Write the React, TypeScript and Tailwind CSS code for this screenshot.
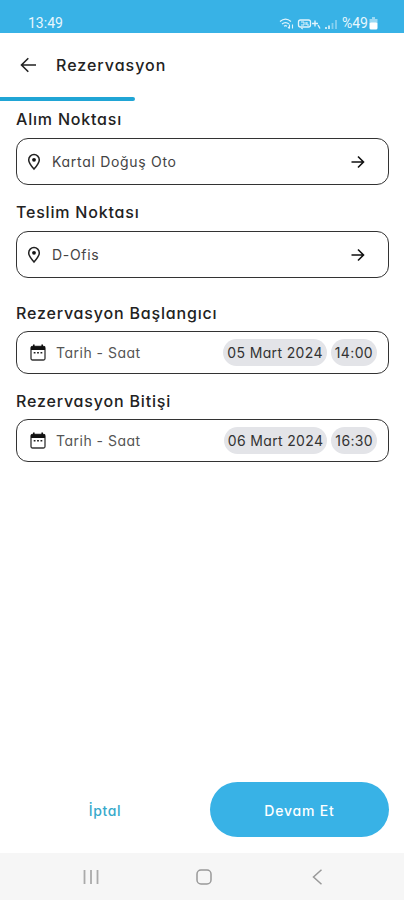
import type { ReactNode } from 'react';

function PinIcon() {
  return (
    <svg width="14" height="18" viewBox="0 0 14 18" fill="none">
      <path
        d="M7 16C4 12.600 1.700 9.500 1.700 6.900a5.300 5.300 0 0 1 10.600 0c0 2.600-2.300 5.700-5.300 9.100Z"
        stroke="#222"
        strokeWidth="1.500"
      />
      <circle cx="7" cy="6.800" r="1.900" fill="#111" />
    </svg>
  );
}

function CalendarIcon() {
  return (
    <svg width="16" height="17" viewBox="0 0 16 17" fill="none">
      <rect x="1" y="2.500" width="14" height="13.500" rx="1.500" stroke="#333" strokeWidth="1.300" />
      <path d="M1 2.500h14v3.500H1z" fill="#111" />
      <path d="M3.800 0.500v3M12.200 0.500v3" stroke="#111" strokeWidth="1.600" />
      <path d="M3.700 8.700h1.800M7.100 8.700h1.800M10.500 8.700h1.800" stroke="#222" strokeWidth="1.500" />
    </svg>
  );
}

function ArrowRight() {
  return (
    <svg width="14" height="14" viewBox="0 0 14 14" fill="none" stroke="#111" strokeWidth="1.600">
      <path d="M0.500 7h12M7 1.500 12.500 7 7 12.500" />
    </svg>
  );
}

function StatusIcons() {
  return (
    <svg width="60" height="14" viewBox="0 0 60 14" fill="none" stroke="#e2f4fc">
      {/* wifi */}
      <path d="M1 4.500c3.500-3 7.500-3 11 0M3 7c2.300-1.900 4.700-1.900 7 0M5 9.200c1-.8 2-.8 3 0" strokeWidth="1.200" />
      <path d="M10.500 7.500v4M9 10l1.500 1.500M13.500 11.500v-4" strokeWidth="1.100" />
      {/* VoLTE */}
      <rect x="19.500" y="3" width="12" height="7" rx="2" strokeWidth="1.300" />
      <path d="M22 5h3v3h-3M28 5v3h2M22 11l2 1M27 5v3" strokeWidth="1" />
      <path d="M33 6.500h6M36 3.500v6M39 8l2 3.500" strokeWidth="1.400" />
      {/* signal */}
      <path d="M47 12v-2M50 12V8.500" strokeWidth="1.600" />
      <path d="M53.500 12V6M57 12V3" strokeWidth="1.800" opacity="0.45" />
    </svg>
  );
}

function PointField({ label, value }: { label: string; value: string }) {
  return (
    <section>
      <h2 className="h-[27px] text-base leading-[17px] font-medium tracking-[0.8px] text-[#222]">
        {label}
      </h2>
      <button className="flex h-[47px] w-full items-center rounded-xl border border-[#333] pr-[23px] pl-[10px]">
        <PinIcon />
        <span className="ml-[11px] flex-1 text-left text-sm tracking-[0.7px] text-[#444]">{value}</span>
        <ArrowRight />
      </button>
    </section>
  );
}

function Pill({ children }: { children: ReactNode }) {
  return (
    <span className="flex h-[27px] items-center rounded-full bg-[#e3e4e8] px-1 text-sm tracking-[0.35px] whitespace-nowrap text-[#333]">
      {children}
    </span>
  );
}

function DateField({ label, date, time }: { label: string; date: string; time: string }) {
  return (
    <section>
      <h2 className="h-[27px] text-base leading-[18px] font-medium tracking-[0.82px] text-[#222]">
        {label}
      </h2>
      <button className="flex h-[43px] w-full items-center rounded-xl border border-[#333] pr-[11px] pl-[13px]">
        <CalendarIcon />
        <span className="ml-[10px] flex-1 text-left text-sm tracking-[0.5px] text-[#555]">
          Tarih - Saat
        </span>
        <span className="flex gap-1">
          <Pill>{date}</Pill>
          <Pill>{time}</Pill>
        </span>
      </button>
    </section>
  );
}

export default function App() {
  return (
    <main className="flex h-[900px] w-[404px] flex-col bg-white font-['Inter',sans-serif] [font-feature-settings:'cv11']">
      {/* Status bar */}
      <div className="flex h-[33px] items-end justify-between bg-[#38b2e6] pr-[26px] pb-[2px] pl-7 font-['Roboto',sans-serif] text-sm text-[#e8f7fd]">
        <span className="leading-[15px]">13:49</span>
        <span className="flex items-center gap-1 leading-[15px]">
          <StatusIcons />
          <span className="-ml-px">%49</span>
          <svg width="9" height="13" viewBox="0 0 9 13" className="-ml-[3px]">
            <path d="M3 0h3v2h2.500v5h-8V2H3z" fill="#9bd9f3" />
            <rect x="0.500" y="5.500" width="8" height="7" rx="1.500" fill="#fff" />
          </svg>
        </span>
      </div>

      <header className="flex h-16 items-center pl-5">
        <svg width="17" height="16" viewBox="0 0 17 16" fill="none" stroke="#222" strokeWidth="1.600">
          <path d="M16 8H1.500M8.300 1.200 1.500 8l6.800 6.800" />
        </svg>
        <h1 className="ml-[19px] text-base font-medium tracking-[1px] text-[#222]">Rezervasyon</h1>
      </header>
      <div className="h-1 w-[135px] rounded-r-sm bg-[#20a5d5]" />

      <div className="flex flex-1 flex-col pt-[10px] pr-[15px] pl-4">
        <div className="flex flex-col gap-[19px]">
          <PointField label="Alım Noktası" value="Kartal Doğuş Oto" />
          <PointField label="Teslim Noktası" value="D-Ofis" />
        </div>
        <div className="mt-[26px] flex flex-col gap-[18px]">
          <DateField label="Rezervasyon Başlangıcı" date="05 Mart 2024" time="14:00" />
          <DateField label="Rezervasyon Bitişi" date="06 Mart 2024" time="16:30" />
        </div>
      </div>

      <footer className="mb-4 flex gap-4 pr-[15px] pl-4">
        <button className="h-[55px] flex-1 pt-0.5 text-sm font-medium tracking-[0.6px] text-[#37a9cb]">
          İptal
        </button>
        <button className="h-[55px] w-[179px] rounded-full bg-[#38b2e6] pt-0.5 text-sm font-medium tracking-[0.8px] text-white">
          Devam Et
        </button>
      </footer>

      {/* Android navigation */}
      <nav className="flex h-[47px] items-center justify-between bg-[#f6f6f6] pr-[81px] pl-[83px]">
        <svg width="16" height="16" viewBox="0 0 16 16" stroke="#aaa" strokeWidth="1.800">
          <path d="M1.500 1v14M8 1v14M14.500 1v14" />
        </svg>
        <svg width="16" height="16" viewBox="0 0 16 16" fill="none" stroke="#999" strokeWidth="1.500" className="-ml-[3px]">
          <rect x="1" y="1" width="14" height="14" rx="4" />
        </svg>
        <svg width="11" height="16" viewBox="0 0 11 16" fill="none" stroke="#999" strokeWidth="1.500">
          <path d="M9.500 0.800 1.500 8l8 7.200" />
        </svg>
      </nav>
    </main>
  );
}
